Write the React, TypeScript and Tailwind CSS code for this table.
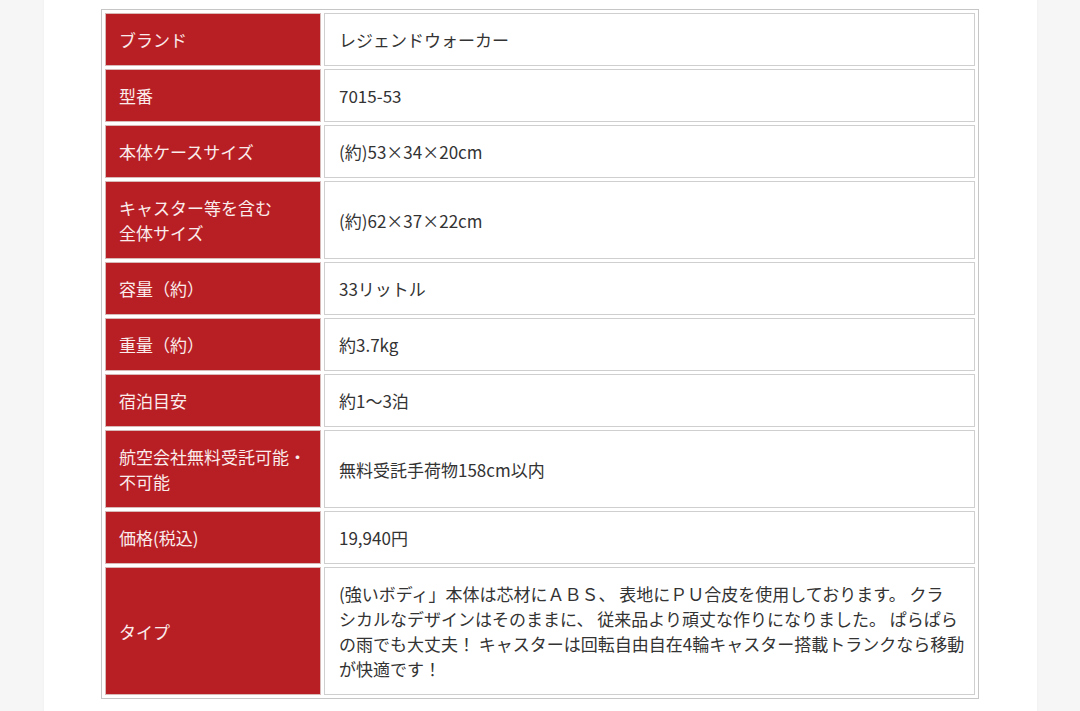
import React from "react";

type Row = { label: React.ReactNode; value: React.ReactNode };

const rows: Row[] = [
  { label: "ブランド", value: "レジェンドウォーカー" },
  { label: "型番", value: "7015-53" },
  { label: "本体ケースサイズ", value: "(約)53×34×20cm" },
  {
    label: (
      <>
        キャスター等を含む
        <br />
        全体サイズ
      </>
    ),
    value: "(約)62×37×22cm",
  },
  { label: "容量（約）", value: "33リットル" },
  { label: "重量（約）", value: "約3.7kg" },
  { label: "宿泊目安", value: "約1～3泊" },
  {
    label: (
      <>
        航空会社無料受託可能・
        <br />
        不可能
      </>
    ),
    value: "無料受託手荷物158cm以内",
  },
  { label: "価格(税込)", value: "19,940円" },
  {
    label: "タイプ",
    value: (
      <>
        (強いボディ」本体は芯材にＡＢＳ、 表地にＰＵ合皮を使用しております。 クラ
        <br />
        シカルなデザインはそのままに、 従来品より頑丈な作りになりました。 ぱらぱら
        <br />
        の雨でも大丈夫！ キャスターは回転自由自在4輪キャスター搭載トランクなら移動
        <br />
        が快適です！
      </>
    ),
  },
];

export default function App() {
  return (
    <div
      className="min-h-[711px] w-full bg-[#f6f6f6]"
      style={{ fontFamily: '"Noto Sans CJK JP", "Noto Sans", sans-serif' }}
    >
      <div className="mx-auto min-h-[711px] w-[993px] bg-white pt-[9px] shadow-[0_0_3px_rgba(0,0,0,0.04)]">
        <table className="mx-auto w-[878px] table-fixed border-separate border-spacing-[3px] border border-[#c6c6c6]">
          <tbody>
            {rows.map((r, i) => (
              <tr key={i}>
                <th className="w-[216px] border border-[#d9b8b8] bg-[#b81f25] px-[13px] py-[13px] text-left align-middle text-[17px] font-normal leading-[25px] text-[#fbecec]">
                  {r.label}
                </th>
                <td className="border border-[#cfcfcf] bg-white py-[13px] pl-[14px] pr-[4px] align-middle text-[17px] leading-[25px] text-[#333333]">
                  {r.value}
                </td>
              </tr>
            ))}
          </tbody>
        </table>
      </div>
    </div>
  );
}
